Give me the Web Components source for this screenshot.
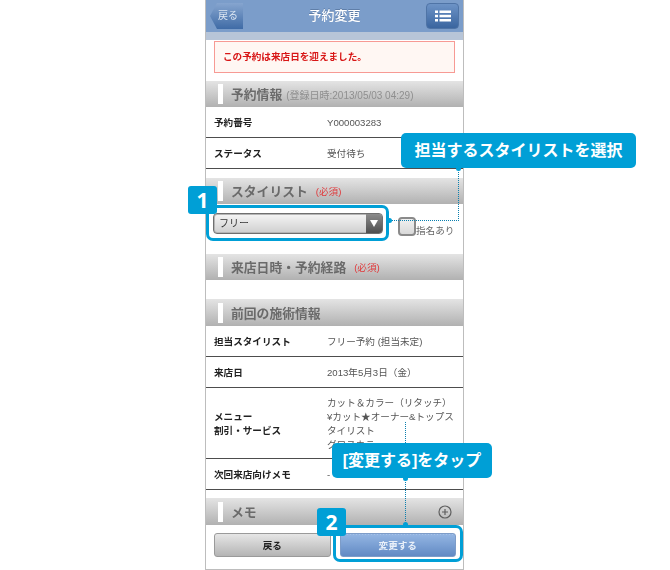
<!DOCTYPE html>
<html lang="ja">
<head>
<meta charset="utf-8">
<title>予約変更</title>
<style>
  html, body { margin: 0; padding: 0; background: #fff; }
  body {
    width: 670px;
    height: 570px;
    overflow: hidden;
    position: relative;
    font-family: "Liberation Sans", "Noto Sans CJK JP", sans-serif;
  }
</style>
</head>
<body>
<phone-frame>
  <nav-bar title="予約変更"></nav-bar>
  <alert-box>この予約は来店日を迎えました。</alert-box>

  <section-head sub="(登録日時:2013/05/03 04:29)" style="margin-top:8px">予約情報</section-head>
  <info-row label="予約番号">Y000003283</info-row>
  <info-row label="ステータス">受付待ち</info-row>

  <section-head note="(必須)" style="margin-top:9px">スタイリスト</section-head>
  <stylist-field></stylist-field>

  <section-head note="(必須)">来店日時・予約経路</section-head>

  <section-head style="margin-top:19px;height:27px">前回の施術情報</section-head>
  <info-row label="担当スタイリスト">フリー予約 (担当未定)</info-row>
  <info-row label="来店日">2013年5月3日（金）</info-row>
  <info-row label="メニュー&#10;割引・サービス" tall>カット＆カラー（リタッチ）<br>¥カット★オーナー&amp;トップス<br>タイリスト<br>グロスカラー</info-row>
  <info-row label="次回来店向けメモ">-</info-row>

  <section-head plus style="margin-top:8px;height:27px">メモ</section-head>
  <action-bar></action-bar>
</phone-frame>
<guide-layer></guide-layer>

<script>
const navBarTemplate = document.createElement('template');
navBarTemplate.innerHTML = `
  <style>
    :host { display: block; }
    .bar {
      height: 32px;
      display: flex;
      align-items: center;
      justify-content: space-between;
      padding: 0 4px;
      background: #7b9dca;
    }
    .strip { height: 8px; background: #b7c5d8; }
    .title {
      flex: 1;
      text-align: center;
      color: #fff;
      font-size: 13px;
      font-weight: 500;
      padding-bottom: 4px;
      text-shadow: 0 -1px 0 #5f7ea8;
    }
    .back {
      width: 33px;
      height: 26px;
      clip-path: polygon(0 50%, 7px 0, 100% 0, 100% 100%, 7px 100%);
      background: linear-gradient(#86a5cf, #3f6ba6);
      color: #dce6f2;
      font-size: 10px;
      line-height: 26px;
      text-align: center;
      padding-left: 3px;
      box-sizing: border-box;
    }
    .menu {
      width: 33px;
      height: 26px;
      box-sizing: border-box;
      border: 1px solid #4f74a6;
      border-radius: 4px;
      background: linear-gradient(#6d93c6, #3a659f);
      display: flex;
      align-items: center;
      justify-content: center;
    }
  </style>
  <div class="bar">
    <div class="back">戻る</div>
    <div class="title"></div>
    <div class="menu">
      <svg width="16" height="12" viewBox="0 0 16 12" fill="#fff">
        <rect x="0" y="0.5" width="3" height="2.5"/><rect x="4.5" y="0.5" width="11.5" height="2.5"/>
        <rect x="0" y="4.8" width="3" height="2.5"/><rect x="4.5" y="4.8" width="11.5" height="2.5"/>
        <rect x="0" y="9" width="3" height="2.5"/><rect x="4.5" y="9" width="11.5" height="2.5"/>
      </svg>
    </div>
  </div>
  <div class="strip"></div>
`;
class NavBar extends HTMLElement {
  constructor() {
    super();
    this.attachShadow({ mode: 'open' });
    this.shadowRoot.appendChild(navBarTemplate.content.cloneNode(true));
  }

  connectedCallback() {
    this.shadowRoot.querySelector('.title').textContent = this.getAttribute('title');
  }
}
window.customElements.define('nav-bar', NavBar);

const phoneTemplate = document.createElement('template');
phoneTemplate.innerHTML = `
  <style>
    :host {
      display: block;
      box-sizing: border-box;
      width: 259px;
      height: 570px;
      margin-left: 205px;
      overflow: hidden;
      background: #fff;
      border-left: 1px solid #bdbdbd;
      border-right: 1px solid #bdbdbd;
      border-bottom: 1px solid #bdbdbd;
      filter: blur(.3px);
    }
  </style>
  <slot></slot>
`;
class PhoneFrame extends HTMLElement {
  constructor() {
    super();
    this.attachShadow({ mode: 'open' });
    this.shadowRoot.appendChild(phoneTemplate.content.cloneNode(true));
  }
}
window.customElements.define('phone-frame', PhoneFrame);

const alertTemplate = document.createElement('template');
alertTemplate.innerHTML = `
  <style>
    :host {
      display: block;
      box-sizing: border-box;
      height: 32px;
      margin: 1px 8px 0;
      padding-left: 8px;
      line-height: 30px;
      background: #fff7f3;
      border: 1px solid #f79a94;
      color: #d81616;
      font-size: 9.6px;
      font-weight: 700;
    }
  </style>
  <slot></slot>
`;
class AlertBox extends HTMLElement {
  constructor() {
    super();
    this.attachShadow({ mode: 'open' });
    this.shadowRoot.appendChild(alertTemplate.content.cloneNode(true));
  }
}
window.customElements.define('alert-box', AlertBox);

const sectionTemplate = document.createElement('template');
sectionTemplate.innerHTML = `
  <style>
    :host {
      display: flex;
      align-items: center;
      box-sizing: border-box;
      height: 26px;
      padding: 0 12px 0 12px;
      background: linear-gradient(#e4e4e4, #b1b1b1);
    }
    .mark { width: 5px; height: 20px; background: #fff; margin-right: 8px; flex: none; }
    .text { color: #6a6a6a; font-size: 12.8px; font-weight: 700; white-space: nowrap; padding-bottom: 1px; }
    .sub { color: #8f8f8f; font-size: 10px; margin-left: 4px; white-space: nowrap; }
    .note { color: #e0383a; font-size: 9.6px; margin-left: 8px; white-space: nowrap; }
    .sub:empty, .note:empty { display: none; }
    .plus { margin-left: auto; margin-right: -1px; display: none; }
    :host([plus]) .plus { display: block; }
  </style>
  <span class="mark"></span>
  <span class="text"><slot></slot></span>
  <span class="sub"></span>
  <span class="note"></span>
  <svg class="plus" width="14" height="14" viewBox="0 0 14 14" fill="none" stroke="#5f5f5f">
    <circle cx="7" cy="7" r="6" stroke-width="1.2"/>
    <path d="M7 4v6M4 7h6" stroke-width="1.2"/>
  </svg>
`;
class SectionHead extends HTMLElement {
  constructor() {
    super();
    this.attachShadow({ mode: 'open' });
    this.shadowRoot.appendChild(sectionTemplate.content.cloneNode(true));
  }

  connectedCallback() {
    this.shadowRoot.querySelector('.sub').textContent = this.getAttribute('sub') || '';
    this.shadowRoot.querySelector('.note').textContent = this.getAttribute('note') || '';
  }
}
window.customElements.define('section-head', SectionHead);

const rowTemplate = document.createElement('template');
rowTemplate.innerHTML = `
  <style>
    :host {
      display: flex;
      align-items: center;
      box-sizing: border-box;
      height: 31px;
      padding: 1px 0 0 8px;
      border-bottom: 1px solid #4d4d4d;
      font-size: 9.6px;
      line-height: 14px;
    }
    :host([tall]) { height: 71px; }
    .label { width: 113px; flex: none; color: #222; font-weight: 700; white-space: pre-line; }
    .value { color: #555; white-space: nowrap; }
  </style>
  <div class="label"></div>
  <div class="value"><slot></slot></div>
`;
class InfoRow extends HTMLElement {
  constructor() {
    super();
    this.attachShadow({ mode: 'open' });
    this.shadowRoot.appendChild(rowTemplate.content.cloneNode(true));
  }

  connectedCallback() {
    this.shadowRoot.querySelector('.label').textContent = this.getAttribute('label');
  }
}
window.customElements.define('info-row', InfoRow);

const stylistTemplate = document.createElement('template');
stylistTemplate.innerHTML = `
  <style>
    :host {
      display: flex;
      box-sizing: border-box;
      height: 50px;
      padding: 9px 0 0 7px;
    }
    .select {
      box-sizing: border-box;
      width: 170px;
      height: 21px;
      display: flex;
      border: 1px solid #6f6f6f;
      border-radius: 4px;
      overflow: hidden;
      background: linear-gradient(#f5f5f5, #cfcfcf);
      box-shadow: 0 0 0 1px #b5b5b5 inset;
    }
    .value { flex: 1; padding-left: 5px; font-size: 10px; line-height: 19px; color: #333; }
    .arrow {
      width: 16px;
      background: linear-gradient(#8b8b8b, #4f4f4f);
      display: flex;
      align-items: center;
      justify-content: center;
    }
    .check {
      box-sizing: border-box;
      width: 18px;
      height: 19px;
      margin: 4px 0 0 15px;
      border: 2px solid #8a8a8a;
      border-radius: 4px;
      background: linear-gradient(#f1f1f1, #d9d9d9);
    }
    .check-label { margin-top: 11px; font-size: 9.6px; line-height: 14px; color: #666; white-space: nowrap; }
  </style>
  <div class="select">
    <div class="value">フリー</div>
    <div class="arrow">
      <svg width="8" height="7" viewBox="0 0 8 7"><path d="M0 0h8L4 7z" fill="#fff"/></svg>
    </div>
  </div>
  <div class="check"></div>
  <div class="check-label">指名あり</div>
`;
class StylistField extends HTMLElement {
  constructor() {
    super();
    this.attachShadow({ mode: 'open' });
    this.shadowRoot.appendChild(stylistTemplate.content.cloneNode(true));
  }
}
window.customElements.define('stylist-field', StylistField);

const actionTemplate = document.createElement('template');
actionTemplate.innerHTML = `
  <style>
    :host {
      display: flex;
      gap: 9px;
      padding: 8px 7px 0 8px;
    }
    .btn {
      box-sizing: border-box;
      flex: 1;
      height: 24px;
      border-radius: 3px;
      text-align: center;
      font-size: 9.6px;
      font-weight: 700;
      line-height: 23px;
    }
    .back {
      color: #222;
      border: 1px solid #9a9a9a;
      background: linear-gradient(#e6e6e6, #b4b4b4);
    }
    .submit {
      color: #e9f0f9;
      border: 1px solid #7d9cc8;
      background:
        repeating-linear-gradient(90deg, rgba(255,255,255,.18) 0 1px, transparent 1px 3px) top / 100% 1px no-repeat,
        linear-gradient(#94b6e3, #628ac4);
    }
  </style>
  <div class="btn back">戻る</div>
  <div class="btn submit">変更する</div>
`;
class ActionBar extends HTMLElement {
  constructor() {
    super();
    this.attachShadow({ mode: 'open' });
    this.shadowRoot.appendChild(actionTemplate.content.cloneNode(true));
  }
}
window.customElements.define('action-bar', ActionBar);

// the blue guides sit over the phone, their place on the canvas is the content
const guideTemplate = document.createElement('template');
guideTemplate.innerHTML = `
  <style>
    :host { position: absolute; left: 0; top: 0; width: 670px; height: 570px; pointer-events: none; }
    div { position: absolute; box-sizing: border-box; }
    .callout {
      background: #009fd6;
      color: #fff;
      border-radius: 5px;
      font-size: 16px;
      font-weight: 700;
      line-height: 36px;
      text-align: center;
      white-space: nowrap;
    }
    .badge {
      width: 29px;
      height: 28px;
      background: #009fd6;
      color: #fff;
      border-radius: 3px;
      font-family: "Open Sans", "Liberation Sans", sans-serif;
      font-size: 21px;
      font-weight: 700;
      line-height: 28px;
      text-align: center;
    }
    .ring { border: 3px solid #009fd6; border-radius: 7px; }
    .dot-v { width: 1px; border-left: 1px dotted #0b7fae; }
    .dot-h { height: 1px; border-top: 1px dotted #0b7fae; }
    .cap { width: 5px; height: 5px; border-radius: 50%; background: #009fd6; }
  </style>
  <div class="ring" style="left:206px;top:205px;width:183px;height:36px"></div>
  <div class="ring" style="left:333px;top:525px;width:130px;height:37px"></div>
  <div class="dot-v" style="left:458px;top:168px;height:53px"></div>
  <div class="dot-h" style="left:389px;top:220px;width:70px"></div>
  <div class="dot-v" style="left:405px;top:422px;height:21px"></div>
  <div class="dot-v" style="left:405px;top:478px;height:47px"></div>
  <div class="cap" style="left:456px;top:166px"></div>
  <div class="cap" style="left:387px;top:218px"></div>
  <div class="cap" style="left:403px;top:476px"></div>
  <div class="cap" style="left:403px;top:522px"></div>
  <div class="callout" style="left:401px;top:133px;width:235px;height:35px">担当するスタイリストを選択</div>
  <div class="callout" style="left:332px;top:443px;width:160px;height:35px">[変更する]をタップ</div>
  <div class="badge" style="left:188px;top:186px">1</div>
  <div class="badge" style="left:317px;top:508px">2</div>
`;
class GuideLayer extends HTMLElement {
  constructor() {
    super();
    this.attachShadow({ mode: 'open' });
    this.shadowRoot.appendChild(guideTemplate.content.cloneNode(true));
  }
}
window.customElements.define('guide-layer', GuideLayer);
</script>
</body>
</html>
